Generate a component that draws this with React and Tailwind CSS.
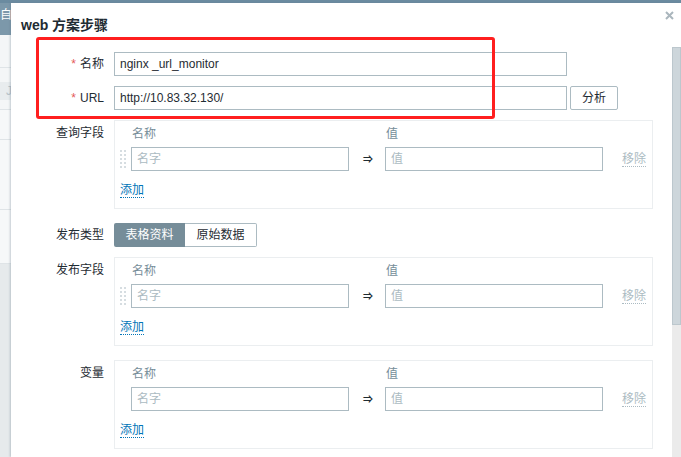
import React from 'react';

const font = { fontFamily: '"Liberation Sans", Arial, "Noto Sans CJK SC", sans-serif' };

const DragHandle = () => (
  <div className="grid grid-cols-2 gap-[2px] w-[6px] mt-[3px]">
    {Array.from({ length: 10 }).map((_, i) => (
      <div key={i} className="w-[2px] h-[2px] bg-[#d6dde1]" />
    ))}
  </div>
);

const PairBox = ({ draggable }) => (
  <div className="w-[539px] border border-[#ebeef0] pt-[5px] pb-[10px] pl-[5px]">
    <div className="flex h-[16px] leading-[16px] text-[#768d99]">
      <div className="w-[11px]" />
      <div className="w-[218px] pl-px">名称</div>
      <div className="w-[36px]" />
      <div className="pl-px">值</div>
    </div>
    <div className="flex items-center mt-[5px]">
      <div className="w-[11px] h-[24px]">{draggable && <DragHandle />}</div>
      <div className="w-[218px] h-[24px] border border-[#acbbc2] px-[5px] leading-[22px] text-[#acbbc2]">名字</div>
      <div className="w-[36px] pl-[2px] text-center text-[#1f2c33] text-[10px] font-bold">⇒</div>
      <div className="w-[218px] h-[24px] border border-[#acbbc2] px-[5px] leading-[22px] text-[#acbbc2]">值</div>
      <span className="ml-[19px] text-[#acbbc2] border-b border-dotted border-[#acbbc2] leading-[14px]">移除</span>
    </div>
    <div className="mt-[11px] h-[16px] leading-[16px]">
      <span className="text-[#0275b8] border-b border-dotted border-[#0275b8] leading-[14px] inline-block">添加</span>
    </div>
  </div>
);

const Row = ({ label, star, children, className = '', labelClass = '' }) => (
  <div className={`flex ${className}`}>
    <div className={`w-[93px] text-right text-[#1f2c33] shrink-0 ${labelClass}`}>
      {star && <span className="text-[#e45959] mr-[4px]">*</span>}
      {label}
    </div>
    <div className="ml-[10px]">{children}</div>
  </div>
);

export default function App() {
  return (
    <div className="relative w-[681px] h-[457px] overflow-hidden bg-[#e6eaec] text-[12px]" style={font}>
      {/* page behind the dialog */}
      <div className="h-[3px] bg-[#6b8ba0]" />
      <div className="w-[11px] flex flex-col">
        <div className="h-[32px] bg-[#7c98aa] text-white text-[12px] leading-[20px] overflow-hidden whitespace-nowrap pt-[2px]">自</div>
        <div className="h-[33px] bg-[#f4f6f7] border-b border-[#dfe4e7]" />
        <div className="h-[42px] bg-[#f4f6f7] border-b border-[#dfe4e7] pt-[14px]">
          <div className="h-[18px] bg-[#e8ecee] text-[#b8c3c9] leading-[18px] pl-[6px] overflow-hidden">J</div>
        </div>
        <div className="h-[30px] bg-[#f6f8f9] border-b border-[#dfe4e7]" />
        <div className="h-[70px] bg-[#f6f8f9] border-b border-[#dfe4e7]" />
        <div className="h-[54px] bg-[#f6f8f9] border-b border-[#dfe4e7]" />
      </div>

      {/* dialog */}
      <div className="absolute left-[11px] top-[3px] right-0 bottom-0 bg-white flex flex-col shadow-[-1px_0_2px_rgba(100,120,135,0.35)]">
        <div className="relative h-[44px] shrink-0">
          <div className="pl-[10px] pt-[12px] text-[14px] leading-[20px] font-bold text-[#1f2c33]">web 方案步骤</div>
          <svg className="absolute left-[654px] top-[8px]" width="9" height="9" viewBox="0 0 9 9">
            <path d="M1 1 L8 8 M8 1 L1 8" stroke="#aab6bd" strokeWidth="2" />
          </svg>
        </div>

        <div className="flex flex-1 min-h-0">
          <div className="w-[661px] pt-[5px]">
            <Row label="名称" star className="items-center">
              <div className="w-[453px] h-[24px] border border-[#acbbc2] px-[5px] leading-[22px] text-[#1f2c33]">nginx _url_monitor</div>
            </Row>
            <Row label="URL" star className="items-center mt-[10px]">
              <div className="flex items-center">
                <div className="w-[453px] h-[24px] border border-[#acbbc2] px-[5px] leading-[22px] text-[#1f2c33]">http://10.83.32.130/</div>
                <div className="ml-[3px] w-[48px] h-[24px] border border-[#acbbc2] rounded-[2px] text-center leading-[22px] text-[#1f2c33]">分析</div>
              </div>
            </Row>
            <Row label="查询字段" className="mt-[10px]" labelClass="pt-[5px] leading-[16px]">
              <PairBox draggable />
            </Row>
            <Row label="发布类型" className="items-center mt-[14px]">
              <div className="flex h-[24px]">
                <div className="w-[71px] bg-[#768d99] text-white text-center leading-[24px] rounded-l-[2px]">表格资料</div>
                <div className="w-[72px] border border-l-0 border-[#acbbc2] text-[#1f2c33] text-center leading-[22px] rounded-r-[2px]">原始数据</div>
              </div>
            </Row>
            <Row label="发布字段" className="mt-[10px]" labelClass="pt-[5px] leading-[16px]">
              <PairBox draggable />
            </Row>
            <Row label="变量" className="mt-[14px]" labelClass="pt-[5px] leading-[16px]">
              <PairBox />
            </Row>
          </div>
          <div className="w-[9px] bg-[#ebebeb] flex flex-col">
            <div className="h-[278px] bg-[#cdd6db] border border-[#bcc7cd]" />
          </div>
        </div>
      </div>

      {/* red annotation frame */}
      <div className="absolute left-[36px] top-[37px] w-[459px] h-[82px] border-[3px] border-[#ff1f1f] rounded-[3px]" />
    </div>
  );
}
